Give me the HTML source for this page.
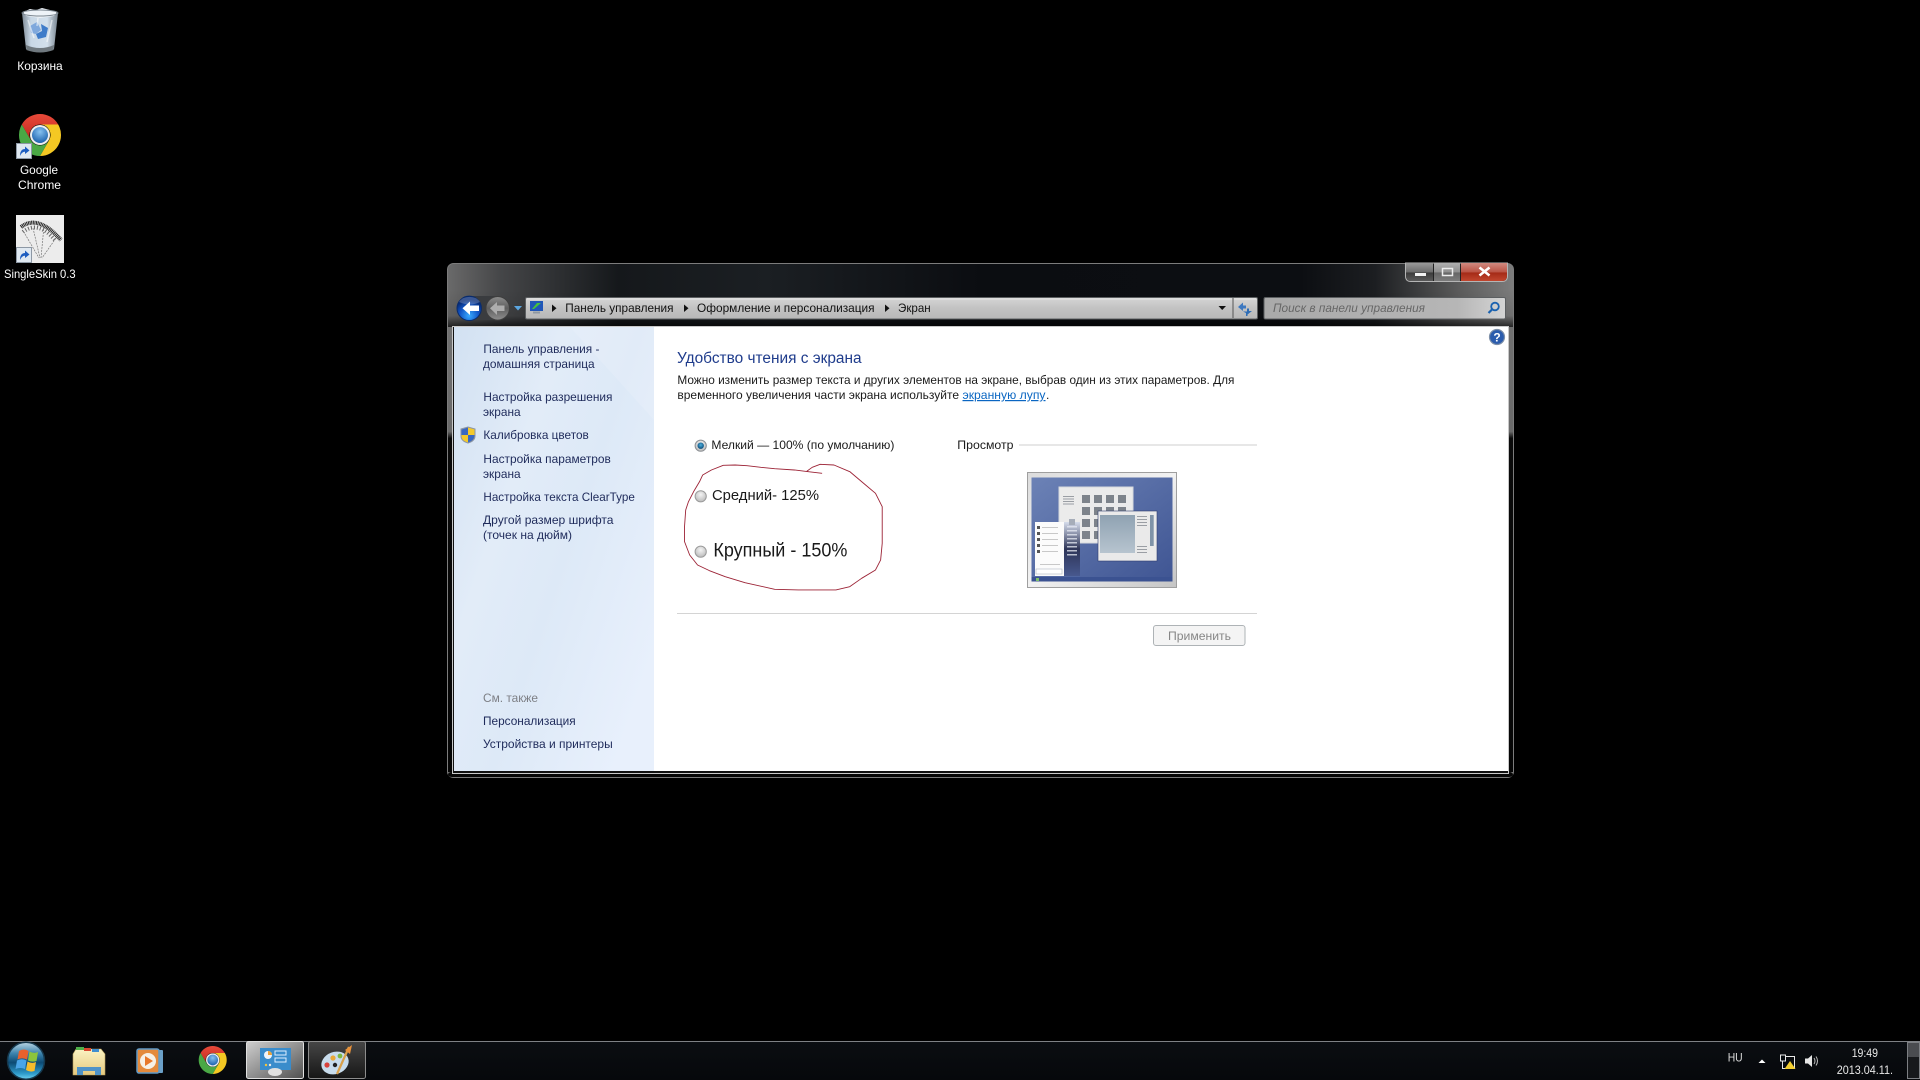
<!DOCTYPE html>
<html lang="ru"><head><meta charset="utf-8"><title>Экран</title>
<style>html,body{margin:0;padding:0;background:#000;width:1920px;height:1080px;overflow:hidden}svg{display:block;position:absolute;left:0;top:0}text{font-family:"Liberation Sans","DejaVu Sans",sans-serif;white-space:pre}</style></head>
<body>
<svg width="1920" height="1080" viewBox="0 0 1920 1080" xmlns="http://www.w3.org/2000/svg">
<defs>
<linearGradient id="winH" x1="0" x2="1" y1="0" y2="0"><stop offset="0" stop-color="#6a6a6a"/><stop offset=".05" stop-color="#454648"/><stop offset=".16" stop-color="#15181b"/><stop offset=".3" stop-color="#1b1f23"/><stop offset=".5" stop-color="#0b0d11"/><stop offset=".8" stop-color="#0c0e12"/><stop offset=".87" stop-color="#1c1e21"/><stop offset=".95" stop-color="#5c5c5c"/><stop offset="1" stop-color="#7c7c7c"/></linearGradient>
<linearGradient id="fadeV" x1="0" x2="0" y1="0" y2="1"><stop offset="0" stop-color="#000" stop-opacity="0"/><stop offset=".7" stop-color="#000" stop-opacity=".1"/><stop offset="1" stop-color="#000" stop-opacity=".7"/></linearGradient>
<linearGradient id="sideL" x1="0" x2="0" y1="0" y2="1"><stop offset="0" stop-color="#707070"/><stop offset=".235" stop-color="#6a6a6a"/><stop offset=".25" stop-color="#0a0a0a"/><stop offset="1" stop-color="#050505"/></linearGradient>
<linearGradient id="side" x1="0" x2="1" y1="0" y2=".75"><stop offset="0" stop-color="#d2e1f2"/><stop offset=".35" stop-color="#e2ecf8"/><stop offset=".6" stop-color="#dde9f7"/><stop offset="1" stop-color="#e8f0fc"/></linearGradient>
<linearGradient id="addr" x1="0" x2="0" y1="0" y2="1"><stop offset="0" stop-color="#d6d6d6"/><stop offset=".5" stop-color="#c2c2c2"/><stop offset="1" stop-color="#b8b8b8"/></linearGradient>
<linearGradient id="srch" x1="0" x2="1" y1="0" y2="0"><stop offset="0" stop-color="#a9a9a9"/><stop offset=".8" stop-color="#b6b6b6"/><stop offset="1" stop-color="#d4d4d4"/></linearGradient>
<linearGradient id="minb" x1="0" x2="0" y1="0" y2="1"><stop offset="0" stop-color="#9a9a9a"/><stop offset=".5" stop-color="#6d6d6d"/><stop offset=".55" stop-color="#3c3c3c"/><stop offset="1" stop-color="#5a5a5a"/></linearGradient>
<linearGradient id="maxb" x1="0" x2="0" y1="0" y2="1"><stop offset="0" stop-color="#b0b0b0"/><stop offset=".5" stop-color="#8f8f8f"/><stop offset=".55" stop-color="#666"/><stop offset="1" stop-color="#7c7c7c"/></linearGradient>
<linearGradient id="closeb" x1="0" x2="0" y1="0" y2="1"><stop offset="0" stop-color="#d08a80"/><stop offset=".5" stop-color="#bb5445"/><stop offset=".55" stop-color="#a52b17"/><stop offset="1" stop-color="#c1462f"/></linearGradient>
<radialGradient id="back" cx=".5" cy=".8" r=".65"><stop offset="0" stop-color="#39aaff"/><stop offset=".6" stop-color="#1155c6"/><stop offset="1" stop-color="#062a75"/></radialGradient>
<linearGradient id="fwd" x1="0" x2="0" y1="0" y2="1"><stop offset="0" stop-color="#8d8d8d"/><stop offset=".5" stop-color="#5e5e5e"/><stop offset="1" stop-color="#8f8f8f"/></linearGradient>
<radialGradient id="blue" cx=".5" cy=".3" r=".7"><stop offset="0" stop-color="#86c1f0"/><stop offset="1" stop-color="#1c62ae"/></radialGradient>
<linearGradient id="chr" x1="0" x2="0" y1="0" y2="1"><stop offset="0" stop-color="#e84a3a"/><stop offset="1" stop-color="#c2281f"/></linearGradient>
<radialGradient id="radio" cx=".5" cy=".35" r=".7"><stop offset="0" stop-color="#f4f4f4"/><stop offset="1" stop-color="#b6b6b6"/></radialGradient>
<radialGradient id="radioOn" cx=".5" cy=".4" r=".6"><stop offset="0" stop-color="#4fb0dd"/><stop offset="1" stop-color="#0a4a78"/></radialGradient>
<linearGradient id="frame" x1="0" x2="1" y1="0" y2="1"><stop offset="0" stop-color="#dcdcdc"/><stop offset=".5" stop-color="#f2f2f2"/><stop offset="1" stop-color="#c4c4c4"/></linearGradient>
<linearGradient id="desk" x1="0" x2="1" y1="0" y2="1"><stop offset="0" stop-color="#6c82b6"/><stop offset="1" stop-color="#3f5593"/></linearGradient>
<linearGradient id="menuD" x1="0" x2="0" y1="0" y2="1"><stop offset="0" stop-color="#d5dceb"/><stop offset=".5" stop-color="#2e3558"/><stop offset="1" stop-color="#47588e"/></linearGradient>
<linearGradient id="img" x1="0" x2="0" y1="0" y2="1"><stop offset="0" stop-color="#8fa2b2"/><stop offset="1" stop-color="#b7c4cf"/></linearGradient>
<linearGradient id="tb" x1="0" x2="0" y1="0" y2="1"><stop offset="0" stop-color="#0b0e12"/><stop offset="1" stop-color="#06080b"/></linearGradient>
<linearGradient id="act" x1="0" x2="1" y1="0" y2="1"><stop offset="0" stop-color="#cfcfcf"/><stop offset=".55" stop-color="#8b8b8b"/><stop offset="1" stop-color="#4f4f4f"/></linearGradient>
<linearGradient id="pnt" x1="0" x2="0" y1="0" y2="1"><stop offset="0" stop-color="#464646"/><stop offset="1" stop-color="#161616"/></linearGradient>
<linearGradient id="orb" x1="0" x2="0" y1="0" y2="1"><stop offset="0" stop-color="#bcd6e4"/><stop offset=".3" stop-color="#3d84ae"/><stop offset=".55" stop-color="#0c4a74"/><stop offset=".85" stop-color="#2f9ccc"/><stop offset="1" stop-color="#6fd0ee"/></linearGradient>
<linearGradient id="bin" x1="0" x2="1" y1="0" y2="0"><stop offset="0" stop-color="#7f8b96"/><stop offset=".25" stop-color="#c9d8e6"/><stop offset=".7" stop-color="#d3e0ec"/><stop offset="1" stop-color="#77838e"/></linearGradient>
<linearGradient id="fold" x1="0" x2="0" y1="0" y2="1"><stop offset="0" stop-color="#fbf3c3"/><stop offset="1" stop-color="#e5c97e"/></linearGradient>
<symbol id="chrome" viewBox="-21 -21 42 42" overflow="visible">
<path d="M-18.2,-10.5A21,21 0 0 1 18.2,-10.5L0,-10.5A10.5,10.5 0 0 0 -9.1,5.25Z" fill="url(#chr)"/>
<path d="M18.2,-10.5A21,21 0 0 1 0,21L9.1,5.25A10.5,10.5 0 0 0 0,-10.5Z" fill="#f4c823"/>
<path d="M0,21A21,21 0 0 1 -18.2,-10.5L-9.1,5.25A10.5,10.5 0 0 0 9.1,5.25Z" fill="#4aa845"/>
<circle r="10" fill="#eee"/><circle r="8" fill="url(#blue)"/>
</symbol>
<symbol id="sc" viewBox="0 0 16 16" overflow="visible">
<rect x=".5" y=".5" width="15" height="15" fill="#dfe8f1" stroke="#8d98a5"/>
<path d="M4,13C4,8 6,6 9,6L9,3.5L13.5,7.5L9,11L9,8.8C7,8.8 5.5,10 4,13Z" fill="#1d5dc0"/>
</symbol>
</defs>

<!-- Desktop icons -->
<path d="M22,13L58,13L54,49Q40,55 26,49Z" fill="url(#bin)"/>
<path d="M23,12L30,9L36,10L42,8L50,10L57,12L54,16L40,18L26,16Z" fill="#eef3f8"/>
<ellipse cx="40" cy="13" rx="18" ry="3" fill="none" stroke="#7c8791"/>
<path d="M26,45Q40,51 54,45L53.6,50Q40,55 26.4,50Z" fill="#70797f"/>
<path d="M30,26L37,22L41,30L36,34L31,33Z" fill="#7fa8dc"/>
<path d="M41,24L48,28L46,37L38,39L36,34L42,31Z" fill="#3f7cc9"/>
<path d="M28,20L34,38M52,20L47,42M38,18L37,26" stroke="#fff" stroke-width="1.5" opacity=".55" fill="none"/>
<text x="17.3" y="70" font-size="12" fill="#fff" textLength="45.4" lengthAdjust="spacingAndGlyphs">Корзина</text>
<use href="#chrome" x="19" y="114" width="42" height="42"/>
<use href="#sc" x="16" y="143" width="16" height="16"/>
<text x="20" y="174" font-size="12" fill="#fff" textLength="38" lengthAdjust="spacingAndGlyphs">Google</text>
<text x="18" y="189" font-size="12" fill="#fff" textLength="43" lengthAdjust="spacingAndGlyphs">Chrome</text>
<rect x="16" y="215" width="48" height="48" fill="#ececec"/>
<path d="M21,227Q38,214 61,240" fill="none" stroke="#222" stroke-width="4" stroke-dasharray="1 .6"/>
<path d="M23,232Q38,220 55,240" fill="none" stroke="#666" stroke-width="4" stroke-dasharray="1 2"/>
<path d="M25,234L39,258M33,228L40,258M44,226L41,258M56,238L42,258" stroke="#777" stroke-width=".7" fill="none" stroke-dasharray="2 1"/>
<use href="#sc" x="16" y="247" width="16" height="16"/>
<text x="4" y="278" font-size="12" fill="#fff" textLength="71.6" lengthAdjust="spacingAndGlyphs">SingleSkin 0.3</text>

<!-- Window -->
<rect x="447.5" y="263.5" width="1066" height="514" rx="6" fill="url(#winH)" stroke="#7c7c7c"/>
<rect x="448" y="290" width="1065" height="37" fill="url(#fadeV)"/>
<rect x="448" y="327" width="4" height="445" fill="url(#sideL)"/>
<rect x="1509" y="327" width="4" height="445" fill="url(#sideL)"/>
<rect x="448" y="772" width="1065" height="5" rx="4" fill="#060606"/>
<rect x="452.5" y="326.5" width="1056" height="447" fill="#111" stroke="#c8c8c8"/>
<rect x="454" y="327" width="1054" height="444" fill="#fff"/>
<rect x="454" y="327" width="200" height="444" fill="url(#side)"/>
<path d="M570,327H654V420Z" fill="#fff" opacity=".13"/>

<!-- Window buttons -->
<path d="M1405.5,263V276Q1405.5,281.5 1411,281.5H1502Q1507.5,281.5 1507.5,276V263Z" fill="#222" stroke="#b5b5b5"/>
<path d="M1406,263H1433V281H1411Q1406,281 1406,276Z" fill="url(#minb)"/>
<rect x="1434" y="263" width="26" height="18" fill="url(#maxb)"/>
<path d="M1461,263H1507V276Q1507,281 1502,281H1461Z" fill="url(#closeb)"/>
<rect x="1415" y="273" width="11" height="3" fill="#f2f2f2"/>
<rect x="1442.5" y="268.5" width="10" height="7" fill="none" stroke="#ececec" stroke-width="1.5"/>
<path d="M1479.5,267.5L1489.5,275.5M1489.5,267.5L1479.5,275.5" stroke="#fff" stroke-width="2.6" fill="none"/>

<!-- Nav -->
<rect x="458" y="296" width="50" height="24" rx="12" fill="#3a3c3f"/>
<circle cx="497.7" cy="308.3" r="11.8" fill="url(#fwd)" stroke="#3e3e3e" stroke-width="1"/>
<path d="M490,308.3L497,302V305.5H504.5V311H497V315Z" fill="#adadad"/>
<circle cx="469.2" cy="308.3" r="12.2" fill="url(#back)" stroke="#0a2c6c"/>
<path d="M462.5,308.3L470,301.5V305.5H479V311H470V315Z" fill="#fff"/>
<path d="M459,302A12,10 0 0 1 480,302Q470,307 459,302Z" fill="#fff" opacity=".22"/>
<path d="M514,306H522L518,310.5Z" fill="#5ba6e0"/>

<!-- Address bar -->
<rect x="525.5" y="297.5" width="732" height="21.5" rx="1.5" fill="url(#addr)" stroke="#5c5f61"/>
<rect x="526.5" y="298.5" width="730" height="1" fill="#e6e6e6"/>
<rect x="1232.5" y="298" width="1" height="20" fill="#555"/>
<rect x="530" y="301" width="13" height="10" fill="#2056b8"/>
<path d="M532,309L537,303H541L534,309Z" fill="#46c23d"/>
<rect x="533" y="311.5" width="7" height="2" fill="#8e98a2"/>
<path d="M552,304.5L556.5,308.3L552,312Z" fill="#111"/>
<path d="M684,304.5L688.5,308.3L684,312Z" fill="#111"/>
<path d="M885,304.5L889.5,308.3L885,312Z" fill="#111"/>
<text x="565.3" y="312" font-size="12" fill="#111" textLength="108.2" lengthAdjust="spacingAndGlyphs">Панель управления</text>
<text x="697" y="312" font-size="12" fill="#111" textLength="177.6" lengthAdjust="spacingAndGlyphs">Оформление и персонализация</text>
<text x="898" y="312" font-size="12" fill="#111" textLength="32.7" lengthAdjust="spacingAndGlyphs">Экран</text>
<path d="M1218.5,306H1226L1222.2,310Z" fill="#111"/>
<path d="M1238,307L1243,302.5V305.5H1246V308.5H1243V311Z" fill="#3d78c0"/>
<path d="M1252,311L1247.5,314.5V316H1246V313L1243,311.5H1247V308.5H1249V311Z" fill="#2e6db6"/>

<!-- Search -->
<rect x="1264" y="297.5" width="241.5" height="21.5" rx="1.5" fill="url(#srch)" stroke="#5c5f61"/>
<text x="1273" y="312" font-size="12" font-style="italic" fill="#666" textLength="152" lengthAdjust="spacingAndGlyphs">Поиск в панели управления</text>
<circle cx="1495" cy="306.5" r="3.8" fill="none" stroke="#1a62b0" stroke-width="1.8"/>
<path d="M1492,309.5L1488.5,313" stroke="#1a62b0" stroke-width="2.2"/>

<!-- Help -->
<circle cx="1497" cy="337" r="7.5" fill="#2b5cad" stroke="#7d8fa8" stroke-width="1.2"/>
<text x="1497" y="341.5" font-size="12" font-weight="bold" fill="#fff" text-anchor="middle">?</text>

<!-- Left panel -->
<g font-size="12" fill="#1e2a5a">
<text x="483.4" y="353" textLength="116" lengthAdjust="spacingAndGlyphs">Панель управления -</text>
<text x="483" y="368" textLength="111.6" lengthAdjust="spacingAndGlyphs">домашняя страница</text>
<text x="483.4" y="401" textLength="129.1" lengthAdjust="spacingAndGlyphs">Настройка разрешения</text>
<text x="483" y="416" textLength="37.6" lengthAdjust="spacingAndGlyphs">экрана</text>
<text x="483.4" y="439" textLength="105.4" lengthAdjust="spacingAndGlyphs">Калибровка цветов</text>
<text x="483.4" y="463" textLength="127.4" lengthAdjust="spacingAndGlyphs">Настройка параметров</text>
<text x="483" y="478" textLength="37.6" lengthAdjust="spacingAndGlyphs">экрана</text>
<text x="483.4" y="501" textLength="151.5" lengthAdjust="spacingAndGlyphs">Настройка текста ClearType</text>
<text x="483" y="524" textLength="130.5" lengthAdjust="spacingAndGlyphs">Другой размер шрифта</text>
<text x="483" y="539" textLength="89" lengthAdjust="spacingAndGlyphs">(точек на дюйм)</text>
<text x="483" y="702" textLength="55" lengthAdjust="spacingAndGlyphs" fill="#7d7f85">См. также</text>
<text x="483" y="725" textLength="92.7" lengthAdjust="spacingAndGlyphs">Персонализация</text>
<text x="483" y="748" textLength="129.7" lengthAdjust="spacingAndGlyphs">Устройства и принтеры</text>
</g>
<path d="M461,429L468,427L475,429V436Q475,441 468,443Q461,441 461,436Z" fill="#f3c92c" stroke="#8a94a8"/>
<path d="M461.5,429.5L468,427.5V435H461.5ZM468,435H474.5V436Q474.5,440.5 468,442.5Z" fill="#3868c4"/>

<!-- Main -->
<text x="677" y="363" font-size="15.5" fill="#1f3c8c" textLength="184.6" lengthAdjust="spacingAndGlyphs">Удобство чтения с экрана</text>
<g font-size="12" fill="#1a1a1a">
<text x="677.4" y="384" textLength="557" lengthAdjust="spacingAndGlyphs">Можно изменить размер текста и других элементов на экране, выбрав один из этих параметров. Для</text>
<text x="677.4" y="399" textLength="281.6" lengthAdjust="spacingAndGlyphs">временного увеличения части экрана используйте</text>
<text x="962.5" y="399" fill="#0a66c2" text-decoration="underline" textLength="83" lengthAdjust="spacingAndGlyphs">экранную лупу</text>
<text x="1046" y="399">.</text>
<text x="711.4" y="449" textLength="183" lengthAdjust="spacingAndGlyphs">Мелкий — 100% (по умолчанию)</text>
<text x="957.3" y="449" textLength="56.2" lengthAdjust="spacingAndGlyphs">Просмотр</text>
</g>
<text x="712" y="500" font-size="15" fill="#1a1a1a" textLength="107" lengthAdjust="spacingAndGlyphs">Средний- 125%</text>
<text x="713.4" y="556.5" font-size="19.5" fill="#1a1a1a" textLength="134" lengthAdjust="spacingAndGlyphs">Крупный - 150%</text>
<rect x="1019" y="444.5" width="238" height="1" fill="#cfcfcf"/>
<rect x="677" y="613" width="580" height="1" fill="#d4d4d4"/>
<circle cx="700.7" cy="445.7" r="5.6" fill="url(#radio)" stroke="#8c9094"/>
<circle cx="700.7" cy="445.7" r="3.2" fill="url(#radioOn)"/>
<circle cx="700.7" cy="496.3" r="5.6" fill="url(#radio)" stroke="#9b9b9b"/>
<circle cx="700.7" cy="551.7" r="5.6" fill="url(#radio)" stroke="#9b9b9b"/>
<rect x="1153.5" y="625.5" width="91.5" height="20" rx="2.5" fill="#f4f4f4" stroke="#aeb3b6"/>
<text x="1168" y="640" font-size="12" fill="#868686" textLength="63" lengthAdjust="spacingAndGlyphs">Применить</text>

<!-- Red scribble -->
<g transform="translate(660,360) scale(0.3954,0.3333)">
<path d="M410,340L375,335L340,330L290,326L255,322L220,317L190,315L160,316L130,330L108,345L100,365L85,395L72,425L65,450L62,500L62,545L75,585L95,615L125,632L165,650L215,668L290,688L350,690L445,690L480,680L510,655L545,630L558,600L562,550L562,440L545,400L520,375L480,335L440,315L405,313L385,322L370,335" fill="none" stroke="#9c2336" stroke-width=".9" stroke-linejoin="round" vector-effect="non-scaling-stroke"/>
</g>

<!-- Preview image -->
<rect x="1027.5" y="472.5" width="149" height="115" fill="url(#frame)" stroke="#9f9f9f"/>
<rect x="1031.5" y="477.5" width="141" height="104" fill="url(#desk)"/>
<rect x="1031.5" y="577" width="141" height="4.5" fill="#3b5291"/>
<rect x="1036" y="578" width="3" height="3" fill="#7fbf6a"/>
<rect x="1059" y="487" width="74" height="56" fill="#ebebeb" stroke="#d6d8dc"/>
<g fill="#9a9ea4"><rect x="1063" y="496" width="11" height="1"/><rect x="1063" y="498.5" width="11" height="1"/><rect x="1063" y="501" width="11" height="1"/><rect x="1063" y="503.5" width="11" height="1"/></g>
<g fill="#7d838b">
<rect x="1082" y="495" width="8" height="8"/><rect x="1094" y="495" width="8" height="8"/><rect x="1106" y="495" width="8" height="8"/><rect x="1118" y="495" width="8" height="8"/>
<rect x="1082" y="507" width="8" height="8"/><rect x="1094" y="507" width="8" height="8"/><rect x="1106" y="507" width="8" height="8"/><rect x="1118" y="507" width="8" height="8"/>
<rect x="1082" y="519" width="8" height="8"/><rect x="1094" y="519" width="8" height="8"/>
<rect x="1082" y="531" width="8" height="8"/><rect x="1094" y="531" width="8" height="8"/></g>
<rect x="1098" y="511" width="59" height="50" fill="#eaeaea" stroke="#2f3d6e" stroke-width=".6"/>
<rect x="1100" y="515" width="35" height="38" fill="url(#img)"/>
<g fill="#9a9ea4"><rect x="1137" y="516" width="10" height="1"/><rect x="1137" y="519" width="10" height="1"/><rect x="1137" y="522" width="10" height="1"/><rect x="1137" y="525" width="10" height="1"/><rect x="1137" y="546" width="10" height="1"/><rect x="1137" y="549" width="10" height="1"/><rect x="1137" y="552" width="10" height="1"/></g>
<rect x="1150" y="515" width="3.7" height="31" fill="#7f93a8"/>
<rect x="1035" y="522" width="45" height="54" fill="url(#menuD)"/>
<rect x="1035" y="522" width="29" height="54" fill="#fbfbfb"/>
<rect x="1069" y="519" width="6" height="6" fill="#a6adb9"/>
<g fill="#555"><rect x="1037" y="526" width="3" height="3"/><rect x="1037" y="532" width="3" height="3"/><rect x="1037" y="538" width="3" height="3"/><rect x="1037" y="544" width="3" height="3"/><rect x="1037" y="550" width="3" height="3"/></g>
<g fill="#c8c8c8"><rect x="1042" y="527" width="16" height="1"/><rect x="1042" y="533" width="16" height="1"/><rect x="1042" y="539" width="16" height="1"/><rect x="1042" y="545" width="16" height="1"/><rect x="1042" y="551" width="16" height="1"/><rect x="1040" y="564" width="20" height="1"/></g>
<rect x="1036" y="569" width="26" height="5" fill="#fff" stroke="#b0b6c0" stroke-width=".6"/>
<g fill="#e8ecf4" opacity=".75"><rect x="1067" y="526" width="10" height="1.5"/><rect x="1067" y="530" width="10" height="1.5"/><rect x="1067" y="534" width="10" height="1.5"/><rect x="1067" y="538" width="10" height="1.5"/><rect x="1067" y="542" width="10" height="1.5"/><rect x="1067" y="546" width="10" height="1.5"/><rect x="1067" y="550" width="10" height="1.5"/><rect x="1067" y="554" width="10" height="1.5"/></g>

<!-- Taskbar -->
<rect x="0" y="1041" width="1920" height="39" fill="url(#tb)"/>
<rect x="0" y="1041" width="1920" height="1" fill="#7e8185"/>
<circle cx="26" cy="1060.7" r="18.5" fill="url(#orb)" stroke="#16384d" stroke-width="1.5"/>
<path d="M19,1051Q24,1048 28.5,1051L27,1059.5Q22,1057 17.5,1059.5Z" fill="#e8612c"/>
<path d="M29.5,1051.5Q34,1054 38,1052L36.5,1061Q32,1062.5 28,1060.5Z" fill="#8cc43c"/>
<path d="M17,1060.5Q22,1058 26.5,1060.5L25,1069Q20,1067 15.5,1069Z" fill="#4aa5e8"/>
<path d="M27.5,1061.5Q32,1064 36,1062L34.5,1071Q30,1072.5 26,1070Z" fill="#f6bc2c"/>
<path d="M76,1049H101L105,1054V1075H73V1054Z" fill="url(#fold)" stroke="#b69c5a" stroke-width=".6"/>
<rect x="76" y="1047" width="8" height="3" fill="#4fb04a"/><rect x="84" y="1048" width="7" height="3" fill="#d9482f"/><rect x="92" y="1049" width="7" height="3" fill="#3f8fd0"/>
<path d="M77,1067H101V1075H95V1071H83V1075H77Z" fill="#4f93c8"/>
<rect x="147" y="1050" width="16" height="23" rx="1" fill="#6ba0c8"/>
<rect x="137" y="1049" width="22" height="24" rx="2" fill="#e48a3c" stroke="#5f9ac8" stroke-width="1.5"/>
<circle cx="148" cy="1061" r="8" fill="#f6f0e6"/>
<path d="M145,1056L153,1061L145,1066Z" fill="#e8782a"/>
<use href="#chrome" x="198.7" y="1046" width="28" height="28"/>
<rect x="246.5" y="1041.5" width="57" height="37" rx="2" fill="url(#act)" stroke="#e0e0e0"/>
<rect x="260" y="1048" width="31" height="22" fill="#3a8ccb"/>
<circle cx="268" cy="1055" r="4" fill="#f1f5fa"/><path d="M268,1055V1051A4,4 0 0 1 272,1055Z" fill="#eaa23a"/>
<rect x="275" y="1051" width="11" height="4" fill="none" stroke="#dfeeff"/><rect x="275" y="1058" width="11" height="4" fill="none" stroke="#dfeeff"/>
<circle cx="266" cy="1065" r="1.2" fill="#f4c43c"/><circle cx="270" cy="1065" r="1.2" fill="#e8e8e8"/>
<ellipse cx="275" cy="1072" rx="7" ry="4" fill="#e0e0e0"/>
<rect x="308.5" y="1041.5" width="57" height="37" rx="2" fill="url(#pnt)" stroke="#8d8d8d"/>
<ellipse cx="335" cy="1063" rx="14" ry="11" fill="#c8dcec" transform="rotate(-20 335 1063)"/>
<circle cx="327" cy="1065" r="2.6" fill="#d8423c"/><circle cx="333" cy="1058" r="2.6" fill="#e8a83a"/><circle cx="340" cy="1056" r="2.4" fill="#7cb842"/><circle cx="335" cy="1065" r="2.2" fill="#222"/>
<path d="M337,1074L349,1047" stroke="#d9a04a" stroke-width="2.2"/>
<path d="M345,1050L352,1045L350,1054Z" fill="#e8913a"/>

<!-- Tray -->
<text x="1727.7" y="1061.5" font-size="12" fill="#dcdcdc" textLength="15" lengthAdjust="spacingAndGlyphs">HU</text>
<path d="M1758.5,1063L1762,1059.5L1765.5,1063Z" fill="#fff"/>
<rect x="1782.5" y="1056.5" width="12" height="12" fill="none" stroke="#e8e8e8"/>
<rect x="1780.5" y="1055" width="5" height="6" fill="#060a0e" stroke="#e8e8e8"/>
<path d="M1790,1061L1795.5,1069H1784.5Z" fill="#f2cd30"/>
<path d="M1805,1058.5H1808L1812,1055V1067L1808,1063.5H1805Z" fill="#e6e6e6"/>
<path d="M1814,1058Q1816,1061 1814,1064M1816,1056.5Q1819,1061 1816,1065.5" stroke="#bdbdbd" fill="none"/>
<text x="1851.7" y="1057" font-size="12" fill="#e8e8e8" textLength="26.3" lengthAdjust="spacingAndGlyphs">19:49</text>
<text x="1836.7" y="1074" font-size="12" fill="#e8e8e8" textLength="56.3" lengthAdjust="spacingAndGlyphs">2013.04.11.</text>
<rect x="1907.5" y="1042.5" width="12" height="36" fill="#17191c" stroke="#7c7f83"/>
<rect x="1908" y="1043" width="11" height="14" fill="#4a4c50"/>
</svg>
</body></html>
